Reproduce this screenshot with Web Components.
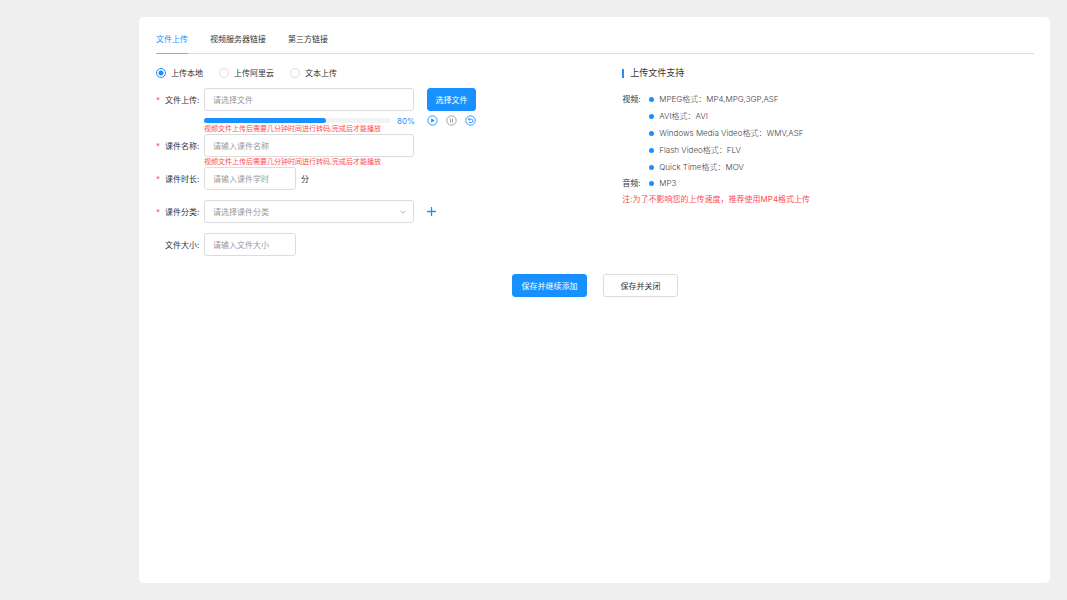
<!DOCTYPE html>
<html lang="zh-CN">
<head>
<meta charset="UTF-8">
<title>文件上传</title>
<style>
    body {
        margin: 0;
        background: #efefef;
        color: #333;
        font: 8px/16px Inter, "Noto Sans CJK SC", sans-serif;
        --blue: #1890ff;
        --red: #ff4d4f;
        --line: #dcdcdc;
    }
</style>
</head>
<body>
<upload-page></upload-page>

<script>
// shared by every element that holds a form control
const controls = `
    * { box-sizing: border-box; }
    button, input, select { font: inherit; color: inherit; margin: 0; }
    input[type=text], select {
        height: 23px; width: 100%; padding: 0 8px; background: #fff;
        border: 1px solid var(--line); border-radius: 3px; outline: none;
    }
    input::placeholder { color: #999; opacity: 1; }
    button { cursor: pointer; }
`;

class TabBar extends HTMLElement {
    constructor() {
        super();
        this.attachShadow({ mode: "open" });
    }

    connectedCallback() {
        const tabs = this.getAttribute("tabs").split(",");
        this.shadowRoot.innerHTML = `
            <style>
                :host { display: block; border-bottom: 1px solid #dcdcdc; }
                nav { display: flex; gap: 22px; }
                a { color: inherit; text-decoration: none; line-height: 16px; padding: 14px 0 6px; margin-bottom: -1px; border-bottom: 1px solid transparent; }
                a.active { color: var(--blue); border-color: #69b7ff; }
            </style>
            <nav>
                ${tabs.map((tab, i) => `<a href="#" class="${i === 0 ? "active" : ""}">${tab}</a>`).join("")}
            </nav>
        `;
    }
}

class SourcePicker extends HTMLElement {
    constructor() {
        super();
        this.attachShadow({ mode: "open" });
    }

    connectedCallback() {
        const options = this.getAttribute("options").split(",");
        this.shadowRoot.innerHTML = `
            <style>
                ${controls}
                :host { display: flex; gap: 16px; }
                label { display: flex; align-items: center; gap: 5px; }
                input { appearance: none; width: 10px; height: 10px; border: 1px solid var(--line); border-radius: 50%; }
                input:checked { border-color: var(--blue); background: radial-gradient(circle, var(--blue) 2px, transparent 3px); }
            </style>
            ${options.map((option, i) => `
                <label><input type="radio" name="source" ${i === 0 ? "checked" : ""}>${option}</label>
            `).join("")}
        `;
    }
}

// label + input or select, the slot takes whatever stands to the right
class FormField extends HTMLElement {
    constructor() {
        super();
        this.attachShadow({ mode: "open" });
    }

    connectedCallback() {
        const hint = this.getAttribute("placeholder");
        const control = this.hasAttribute("select")
            ? `<select id="control"><option>${hint}</option></select>
               <svg width="6" height="6" viewBox="0 0 6 6"><path d="M.6 2l2.4 2.2L5.4 2" fill="none" stroke="#999" stroke-width=".8"/></svg>`
            : `<input type="text" id="control" placeholder="${hint}">`;

        this.shadowRoot.innerHTML = `
            <style>
                ${controls}
                :host { display: flex; align-items: center; }
                label { width: 48px; padding-left: 9px; white-space: nowrap; flex: none; }
                :host([required]) label { padding-left: 0; }
                :host([required]) label::before { content: "*"; color: var(--red); display: inline-block; width: 9px; }
                .box { display: grid; align-items: center; width: 210px; flex: none; }
                .box > * { grid-area: 1 / 1; }
                :host([short]) .box { width: 92px; }
                select { appearance: none; color: #999; }
                svg { justify-self: end; margin-right: 8px; pointer-events: none; }
            </style>
            <label for="control">${this.getAttribute("label")}:</label>
            <div class="box">${control}</div>
            <slot></slot>
        `;
    }
}

class FieldTip extends HTMLElement {
    constructor() {
        super();
        this.attachShadow({ mode: "open" });
        this.shadowRoot.innerHTML = `
            <style>
                :host { display: block; height: 10px; padding-left: 48px; color: var(--red); font-size: 7px; line-height: 9px; white-space: nowrap; }
            </style>
            <slot></slot>
        `;
    }
}

class UploadProgress extends HTMLElement {
    constructor() {
        super();
        this.attachShadow({ mode: "open" });
    }

    connectedCallback() {
        const value = this.getAttribute("value");
        this.shadowRoot.innerHTML = `
            <style>
                ${controls}
                :host { display: flex; align-items: center; height: 7px; margin: 6px 0 0 48px; }
                .track { width: 187px; height: 5px; border-radius: 3px; background: #f3f3f3; }
                .bar { width: 65%; height: 5px; border-radius: 3px; background: var(--blue); }
                output { width: 23px; padding-left: 6px; color: var(--blue); }
                .tools { display: flex; gap: 8px; margin-left: 13px; }
                button { display: flex; padding: 0; border: 0; background: none; color: var(--blue); }
                button.pause { color: #999; }
                svg { fill: none; stroke: currentColor; stroke-width: .9; }
            </style>
            <div class="track"><div class="bar"></div></div>
            <output>${value}%</output>
            <div class="tools">
                <button aria-label="开始"><svg width="11" height="11" viewBox="0 0 11 11"><circle cx="5.5" cy="5.5" r="4.7"/><path d="M4.2 3.3v4.4l3.3-2.2z" fill="currentColor" stroke="none"/></svg></button>
                <button class="pause" aria-label="暂停"><svg width="11" height="11" viewBox="0 0 11 11"><circle cx="5.5" cy="5.5" r="4.7"/><path d="M4.5 3.5v4M6.5 3.5v4"/></svg></button>
                <button aria-label="重新上传"><svg width="11" height="11" viewBox="0 0 11 11"><circle cx="5.5" cy="5.5" r="4.7"/><path d="M3.4 4.3h2.9a1.6 1.6 0 0 1 0 3.2H3.8M4.7 2.9L3.3 4.3l1.4 1.3"/></svg></button>
            </div>
        `;
    }
}

class ActionButton extends HTMLElement {
    constructor() {
        super();
        this.attachShadow({ mode: "open" });
        this.shadowRoot.innerHTML = `
            <style>
                ${controls}
                :host { display: block; min-width: 75px; }
                :host([small]) { min-width: 49px; }
                button { width: 100%; height: 23px; padding: 0 7px; border: 1px solid var(--line); border-radius: 3px; background: #fff; white-space: nowrap; }
                :host([primary]) button { color: #fff; background: var(--blue); border-color: var(--blue); }
            </style>
            <button type="button"><slot></slot></button>
        `;
    }
}

class FormatSupport extends HTMLElement {
    constructor() {
        super();
        this.attachShadow({ mode: "open" });
        this.groups = [
            { name: "视频", items: ["MPEG格式：MP4,MPG,3GP,ASF", "AVI格式：AVI", "Windows Media Video格式：WMV,ASF", "Flash Video格式：FLV", "Quick Time格式：MOV"] },
            { name: "音频", items: ["MP3"] }
        ];
    }

    connectedCallback() {
        this.shadowRoot.innerHTML = `
            <style>
                :host { display: block; }
                h2 { display: flex; align-items: center; gap: 6px; margin: 0 0 10px; font-size: 9px; line-height: 16px; font-weight: 400; }
                h2::before { content: ""; width: 2px; height: 9px; background: var(--blue); }
                section { display: flex; }
                .name { width: 27px; }
                ul { display: grid; gap: 1px; margin: 0; padding: 0; list-style: none; color: #444; font-weight: 300; }
                li { display: flex; align-items: center; gap: 5px; white-space: nowrap; }
                li::before { content: ""; width: 5px; height: 5px; border-radius: 50%; background: var(--blue); }
                p { margin: 0; color: var(--red); }
            </style>
            <h2>上传文件支持</h2>
            ${this.groups.map((group) => `
                <section>
                    <div class="name">${group.name}:</div>
                    <ul>${group.items.map((item) => `<li>${item}</li>`).join("")}</ul>
                </section>
            `).join("")}
            <p>注:为了不影响您的上传速度，推荐使用MP4格式上传</p>
        `;
    }
}

class UploadPage extends HTMLElement {
    constructor() {
        super();
        this.attachShadow({ mode: "open" });
        this.shadowRoot.innerHTML = `
            <style>
                * { box-sizing: border-box; }
                :host { display: block; padding: 17px 17px 17px 139px; }
                main { min-height: calc(100vh - 34px); padding: 0 16px 17px 17px; border-radius: 5px; background: #fff; }
                .columns { display: grid; grid-template-columns: 53fr 47fr; gap: 2px; padding-top: 11px; }
                source-picker { margin-bottom: 7px; }
                .gap { margin-bottom: 10px; }
                action-button[small] { margin-left: 13px; }
                .unit { margin-left: 5px; }
                .add { display: flex; margin: 0 0 0 13px; padding: 0; border: 0; background: none; color: var(--blue); cursor: pointer; }
                .actions { display: flex; justify-content: center; gap: 16px; margin-top: 18px; }
            </style>
            <main>
                <tab-bar tabs="文件上传,视频服务器链接,第三方链接"></tab-bar>
                <div class="columns">
                    <form>
                        <source-picker options="上传本地,上传阿里云,文本上传"></source-picker>
                        <form-field required label="文件上传" placeholder="请选择文件">
                            <action-button primary small>选择文件</action-button>
                        </form-field>
                        <upload-progress value="80"></upload-progress>
                        <field-tip>视频文件上传后需要几分钟时间进行转码,完成后才能播放</field-tip>
                        <form-field required label="课件名称" placeholder="请输入课件名称"></form-field>
                        <field-tip>视频文件上传后需要几分钟时间进行转码,完成后才能播放</field-tip>
                        <form-field class="gap" required short label="课件时长" placeholder="请输入课件学时">
                            <span class="unit">分</span>
                        </form-field>
                        <form-field class="gap" required select label="课件分类" placeholder="请选择课件分类">
                            <button type="button" class="add" aria-label="添加分类">
                                <svg width="9" height="9" viewBox="0 0 9 9"><path d="M4.5 0v9M0 4.5h9" stroke="#1890ff" stroke-width="1.3"/></svg>
                            </button>
                        </form-field>
                        <form-field short label="文件大小" placeholder="请输入文件大小"></form-field>
                    </form>
                    <format-support></format-support>
                </div>
                <div class="actions">
                    <action-button primary>保存并继续添加</action-button>
                    <action-button>保存并关闭</action-button>
                </div>
            </main>
        `;
    }
}

customElements.define("tab-bar", TabBar);
customElements.define("source-picker", SourcePicker);
customElements.define("form-field", FormField);
customElements.define("field-tip", FieldTip);
customElements.define("upload-progress", UploadProgress);
customElements.define("action-button", ActionButton);
customElements.define("format-support", FormatSupport);
customElements.define("upload-page", UploadPage);
</script>
</body>
</html>
